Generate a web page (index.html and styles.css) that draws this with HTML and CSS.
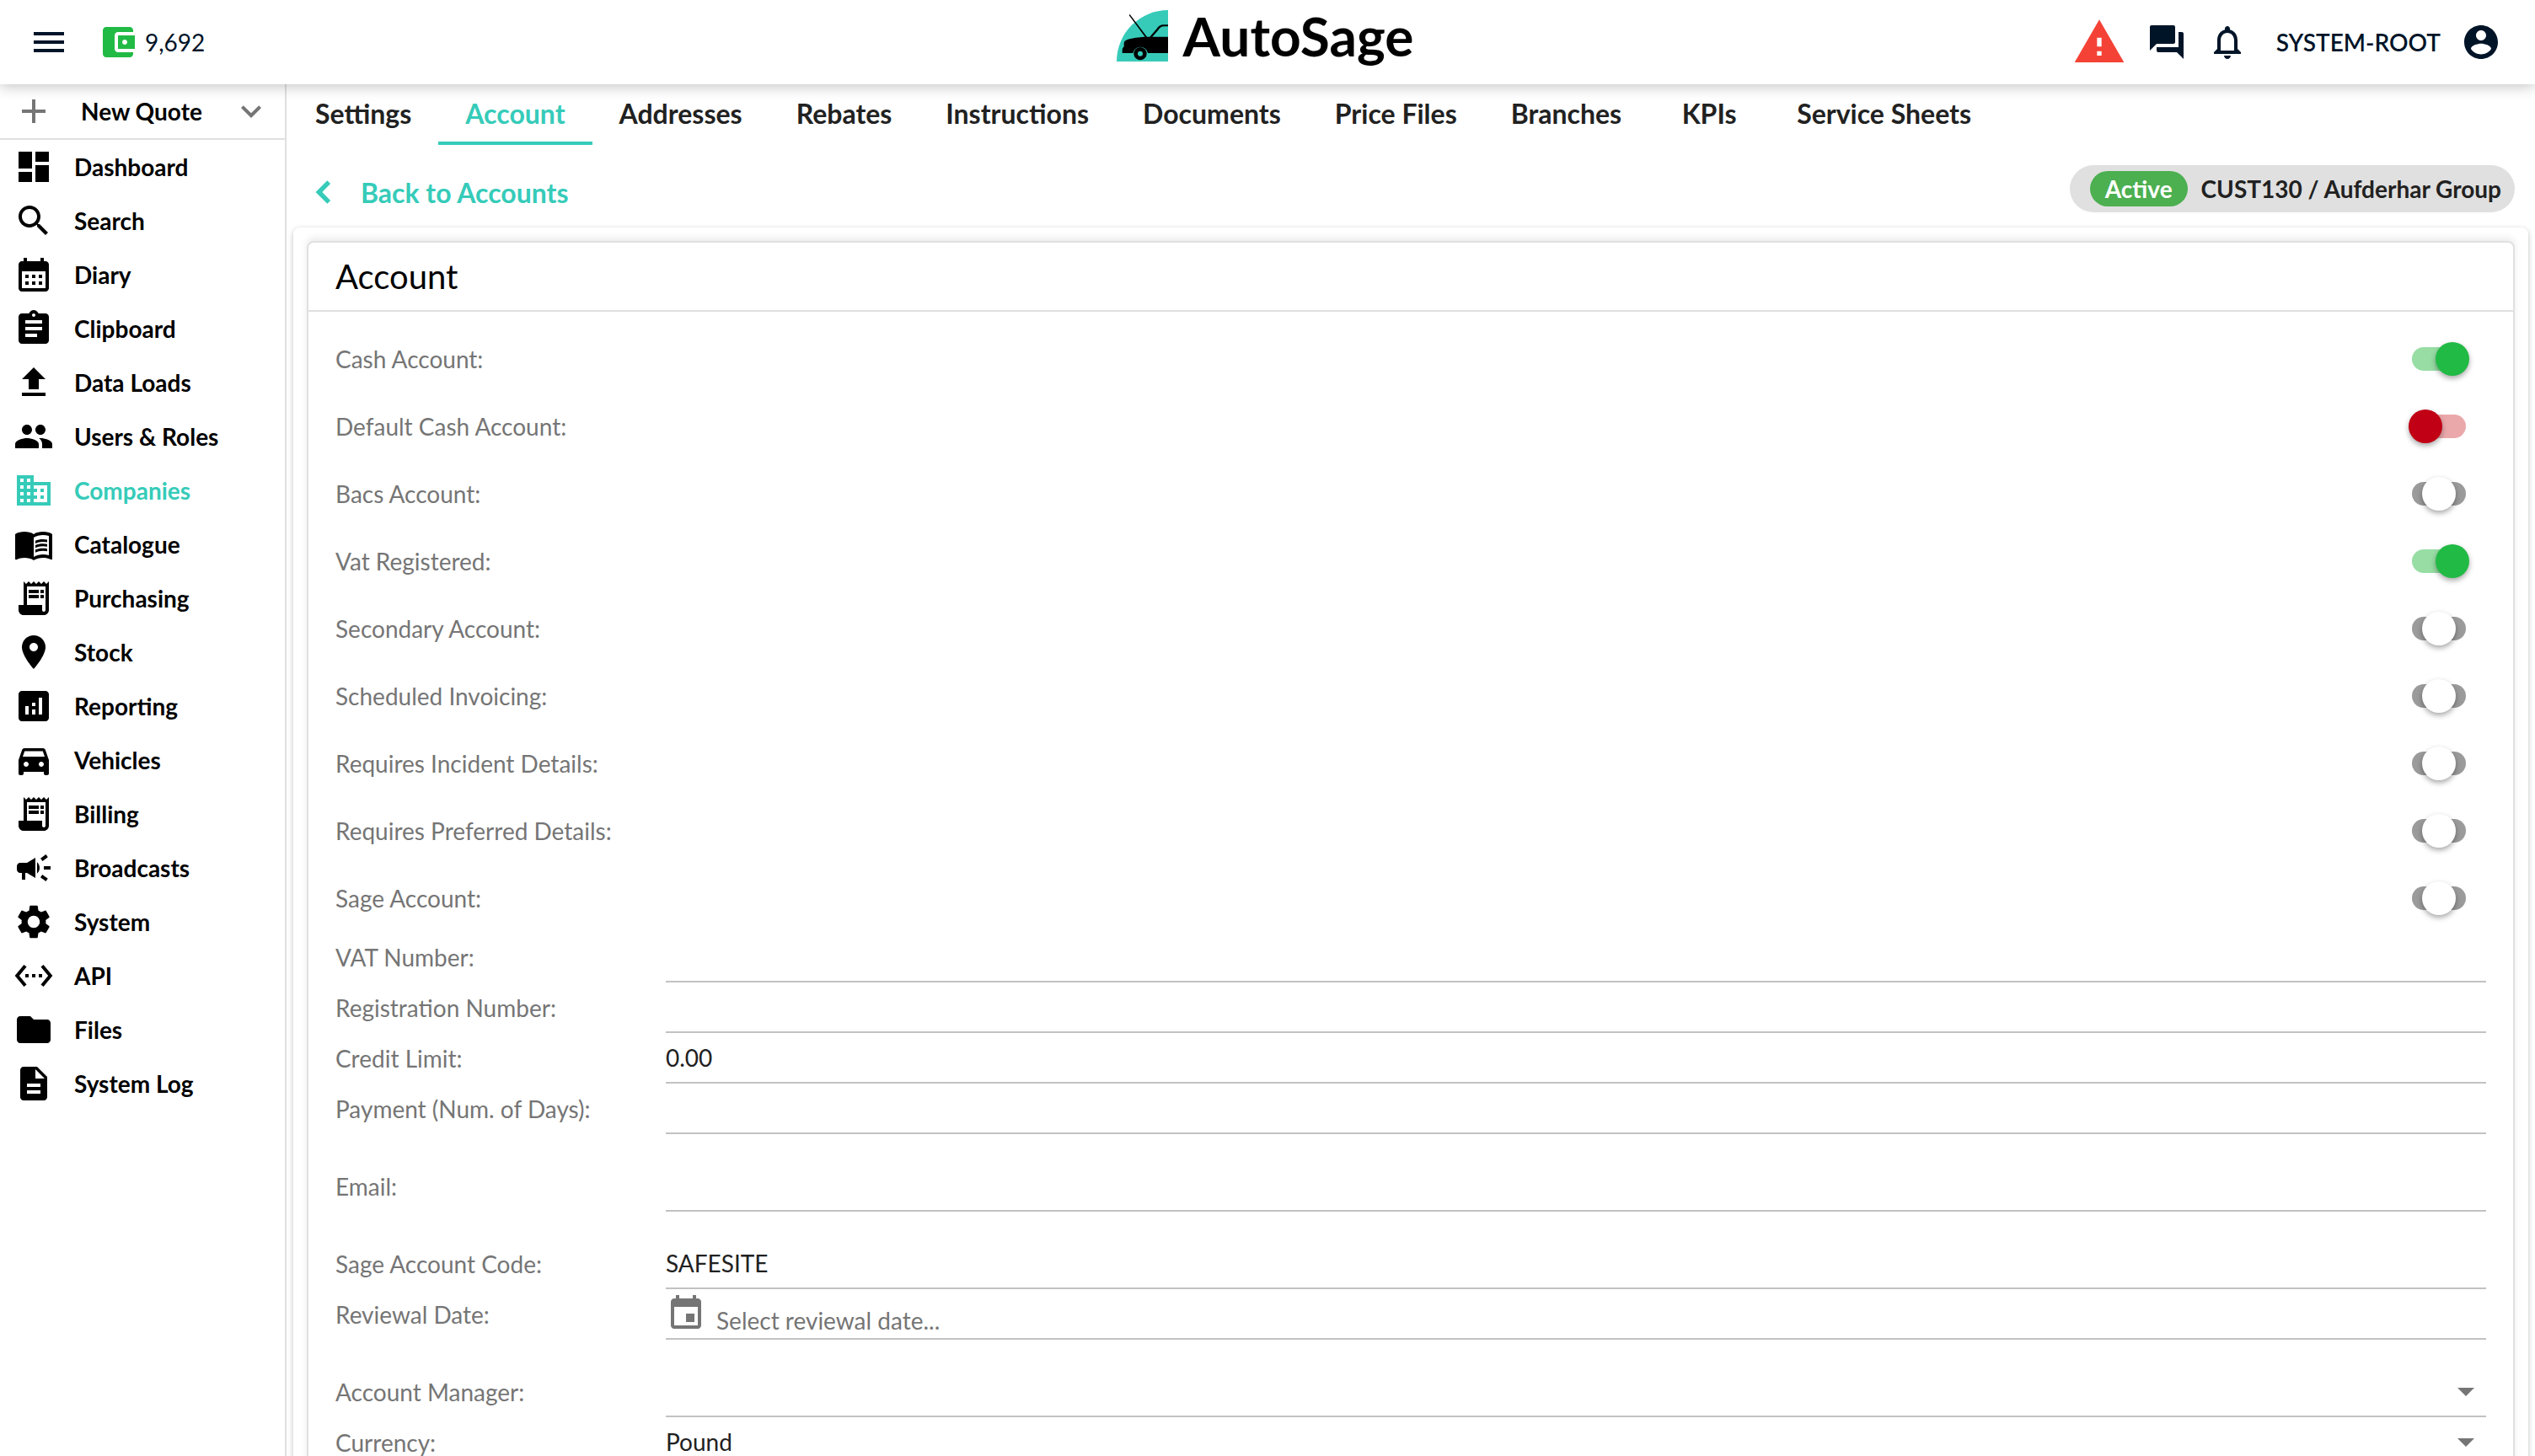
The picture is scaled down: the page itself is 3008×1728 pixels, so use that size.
FILE: index.html
```
<!DOCTYPE html>
<html lang="en">
<head>
    <meta charset="UTF-8">
    <meta name="viewport" content="width=device-width, initial-scale=1.0">
    <title>AutoSage - Account</title>
    <link rel="stylesheet" href="styles.css">
</head>
<body>
    <header class="header">
        <div class="header-left">
            <button class="icon-btn" aria-label="Menu">
                <svg class="icon" viewBox="0 0 24 24"><path d="M3 18h18v-2H3v2zm0-5h18v-2H3v2zm0-7v2h18V6H3z"/></svg>
            </button>
            <div class="credits">
                <svg class="icon icon-green" viewBox="0 0 24 24"><path d="M21 18v1c0 1.1-.9 2-2 2H5c-1.11 0-2-.9-2-2V5c0-1.1.89-2 2-2h14c1.1 0 2 .9 2 2v1h-9c-1.11 0-2 .9-2 2v8c0 1.1.89 2 2 2h9zm-9-2h10V8H12v8zm4-2.5c-.83 0-1.5-.67-1.5-1.5s.67-1.5 1.5-1.5 1.5.67 1.5 1.5-.67 1.5-1.5 1.5z"/></svg>
                <span>9,692</span>
            </div>
        </div>

        <a href="#" class="logo">
            <svg class="logo-mark" viewBox="0 0 183 183">
                <path fill="#36cbb9" d="M0 183A183 183 0 0 1 183 0V183Z"/>
                <path d="M183 52H168C155 52 149 58 143 66L118 95H108L47 15L44 18L101 95C70 97 40 101 29 110C24 115 27 123 26 130C22 134 20 138 20 143V153H58A27 27 0 0 1 111 153H183Z"/>
                <path fill="#36cbb9" d="M183 58H169C159 58 154 63 148 71L127 95H183Z"/>
                <circle cx="84" cy="155" r="23"/>
                <circle cx="84" cy="155" r="9" fill="#36cbb9"/>
            </svg>
            <span>AutoSage</span>
        </a>

        <div class="header-right">
            <button class="icon-btn" aria-label="Warnings">
                <svg class="icon icon-warning" viewBox="0 0 24 24"><path d="M1 21h22L12 2 1 21zm12-3h-2v-2h2v2zm0-4h-2v-4h2v4z"/></svg>
            </button>
            <button class="icon-btn" aria-label="Messages">
                <svg class="icon" viewBox="0 0 24 24"><path d="M21 6h-2v9H6v2c0 .55.45 1 1 1h11l4 4V7c0-.55-.45-1-1-1zm-4 6V3c0-.55-.45-1-1-1H3c-.55 0-1 .45-1 1v14l4-4h10c.55 0 1-.45 1-1z"/></svg>
            </button>
            <button class="icon-btn" aria-label="Notifications">
                <svg class="icon" viewBox="0 0 24 24"><path d="M12 22c1.1 0 2-.9 2-2h-4c0 1.1.9 2 2 2zm6-6v-5c0-3.07-1.63-5.64-4.5-6.32V4c0-.83-.67-1.5-1.5-1.5s-1.5.67-1.5 1.5v.68C7.64 5.36 6 7.92 6 11v5l-2 2v1h16v-1l-2-2zm-2 1H8v-6c0-2.48 1.51-4.5 4-4.5s4 2.02 4 4.5v6z"/></svg>
            </button>
            <button class="user-btn">
                SYSTEM-ROOT
                <svg class="icon" viewBox="0 0 24 24"><path d="M12 2C6.48 2 2 6.48 2 12s4.48 10 10 10 10-4.48 10-10S17.52 2 12 2zm0 3c1.66 0 3 1.34 3 3s-1.34 3-3 3-3-1.34-3-3 1.34-3 3-3zm0 14.2c-2.5 0-4.71-1.28-6-3.22.03-1.99 4-3.08 6-3.08 1.99 0 5.97 1.09 6 3.08-1.29 1.94-3.5 3.22-6 3.22z"/></svg>
            </button>
        </div>
    </header>

    <div class="layout">
        <!-- Sidebar -->
        <aside class="sidebar">
            <button class="new-quote">
                <svg class="icon" viewBox="0 0 24 24"><path d="M19 13h-6v6h-2v-6H5v-2h6V5h2v6h6v2z"/></svg>
                <span class="new-quote-text">New Quote</span>
                <svg class="icon" viewBox="0 0 24 24"><path d="M16.59 8.59L12 13.17 7.41 8.59 6 10l6 6 6-6z"/></svg>
            </button>
            <nav class="side-nav">
                <a href="#" class="side-link"><svg class="icon" viewBox="0 0 24 24"><path d="M3 13h8V3H3v10zm0 8h8v-6H3v6zm10 0h8V11h-8v10zm0-18v6h8V3h-8z"/></svg>Dashboard</a>
                <a href="#" class="side-link"><svg class="icon" viewBox="0 0 24 24"><path d="M15.5 14h-.79l-.28-.27C15.41 12.59 16 11.11 16 9.5 16 5.91 13.09 3 9.5 3S3 5.91 3 9.5 5.91 16 9.5 16c1.61 0 3.09-.59 4.23-1.57l.27.28v.79l5 4.99L20.49 19l-4.99-5zm-6 0C7.01 14 5 11.99 5 9.5S7.01 5 9.5 5 14 7.01 14 9.5 11.99 14 9.5 14z"/></svg>Search</a>
                <a href="#" class="side-link"><svg class="icon" viewBox="0 0 24 24"><path d="M19 4h-1V2h-2v2H8V2H6v2H5c-1.11 0-1.99.9-1.99 2L3 20c0 1.1.89 2 2 2h14c1.1 0 2-.9 2-2V6c0-1.1-.9-2-2-2zm0 16H5V10h14v10zM9 14H7v-2h2v2zm4 0h-2v-2h2v2zm4 0h-2v-2h2v2zm-8 4H7v-2h2v2zm4 0h-2v-2h2v2zm4 0h-2v-2h2v2z"/></svg>Diary</a>
                <a href="#" class="side-link"><svg class="icon" viewBox="0 0 24 24"><path d="M19 3h-4.18C14.4 1.84 13.3 1 12 1c-1.3 0-2.4.84-2.82 2H5c-1.1 0-2 .9-2 2v14c0 1.1.9 2 2 2h14c1.1 0 2-.9 2-2V5c0-1.1-.9-2-2-2zm-7 0c.55 0 1 .45 1 1s-.45 1-1 1-1-.45-1-1 .45-1 1-1zm2 14H7v-2h7v2zm3-4H7v-2h10v2zm0-4H7V7h10v2z"/></svg>Clipboard</a>
                <a href="#" class="side-link"><svg class="icon" viewBox="0 0 24 24"><path d="M9 16h6v-6h4l-7-7-7 7h4zm-4 2h14v2H5z"/></svg>Data Loads</a>
                <a href="#" class="side-link"><svg class="icon" viewBox="0 0 24 24"><path d="M16 11c1.66 0 2.99-1.34 2.99-3S17.66 5 16 5c-1.66 0-3 1.34-3 3s1.34 3 3 3zm-8 0c1.66 0 2.99-1.34 2.99-3S9.66 5 8 5C6.34 5 5 6.34 5 8s1.34 3 3 3zm0 2c-2.33 0-7 1.17-7 3.5V19h14v-2.5c0-2.33-4.67-3.5-7-3.5zm8 0c-.29 0-.62.02-.97.05 1.16.84 1.97 1.97 1.97 3.45V19h6v-2.5c0-2.33-4.67-3.5-7-3.5z"/></svg>Users &amp; Roles</a>
                <a href="#" class="side-link active"><svg class="icon" viewBox="0 0 24 24"><path d="M12 7V3H2v18h20V7H12zM6 19H4v-2h2v2zm0-4H4v-2h2v2zm0-4H4V9h2v2zm0-4H4V5h2v2zm4 12H8v-2h2v2zm0-4H8v-2h2v2zm0-4H8V9h2v2zm0-4H8V5h2v2zm10 12h-8v-2h2v-2h-2v-2h2v-2h-2V9h8v10zm-2-8h-2v2h2v-2zm0 4h-2v2h2v-2z"/></svg>Companies</a>
                <a href="#" class="side-link"><svg class="icon" viewBox="0 0 24 24"><path d="M21 5c-1.11-.35-2.33-.5-3.5-.5-1.95 0-4.05.4-5.5 1.5-1.45-1.1-3.55-1.5-5.5-1.5S2.45 4.9 1 6v14.65c0 .25.25.5.5.5.1 0 .15-.05.25-.05C3.1 20.45 5.05 20 6.5 20c1.95 0 4.05.4 5.5 1.5 1.35-.85 3.8-1.5 5.5-1.5 1.65 0 3.35.3 4.75 1.05.1.05.15.05.25.05.25 0 .5-.25.5-.5V6c-.6-.45-1.25-.75-2-1zm0 13.5c-1.1-.35-2.3-.5-3.5-.5-1.7 0-4.15.65-5.5 1.5V8c1.35-.85 3.8-1.5 5.5-1.5 1.2 0 2.4.15 3.5.5v11.5z"/><path d="M17.5 10.5c.88 0 1.73.09 2.5.26V9.24c-.79-.15-1.64-.24-2.5-.24-1.7 0-3.24.29-4.5.83v1.66c1.13-.64 2.7-.99 4.5-.99zM13 12.49v1.66c1.13-.64 2.7-.99 4.5-.99.88 0 1.73.09 2.5.26V11.9c-.79-.15-1.64-.24-2.5-.24-1.7 0-3.24.3-4.5.83zM17.5 14.33c-1.7 0-3.24.29-4.5.83v1.66c1.13-.64 2.7-.99 4.5-.99.88 0 1.73.09 2.5.26v-1.52c-.79-.16-1.64-.24-2.5-.24z"/></svg>Catalogue</a>
                <a href="#" class="side-link"><svg class="icon" viewBox="0 0 24 24"><path d="M19.5 3.5L18 2l-1.5 1.5L15 2l-1.5 1.5L12 2l-1.5 1.5L9 2 7.5 3.5 6 2v14H3v3c0 1.66 1.34 3 3 3h12c1.66 0 3-1.34 3-3V2l-1.5 1.5zM19 19c0 .55-.45 1-1 1s-1-.45-1-1v-3H8V5h11v14z"/><path d="M9 7h6v2H9zM16 7h2v2h-2zM9 10h6v2H9zM16 10h2v2h-2z"/></svg>Purchasing</a>
                <a href="#" class="side-link"><svg class="icon" viewBox="0 0 24 24"><path d="M12 2C8.13 2 5 5.13 5 9c0 5.25 7 13 7 13s7-7.75 7-13c0-3.87-3.13-7-7-7zm0 9.5c-1.38 0-2.5-1.12-2.5-2.5s1.12-2.5 2.5-2.5 2.5 1.12 2.5 2.5-1.12 2.5-2.5 2.5z"/></svg>Stock</a>
                <a href="#" class="side-link"><svg class="icon" viewBox="0 0 24 24"><path d="M19 3H5c-1.1 0-2 .9-2 2v14c0 1.1.9 2 2 2h14c1.1 0 2-.9 2-2V5c0-1.1-.9-2-2-2zM9 17H7v-5h2v5zm4 0h-2v-3h2v3zm0-5h-2v-2h2v2zm4 5h-2V7h2v10z"/></svg>Reporting</a>
                <a href="#" class="side-link"><svg class="icon" viewBox="0 0 24 24"><path d="M18.92 6.01C18.72 5.42 18.16 5 17.5 5h-11c-.66 0-1.21.42-1.42 1.01L3 12v8c0 .55.45 1 1 1h1c.55 0 1-.45 1-1v-1h12v1c0 .55.45 1 1 1h1c.55 0 1-.45 1-1v-8l-2.08-5.99zM7.5 16c-.83 0-1.5-.67-1.5-1.5S6.67 13 7.5 13s1.5.67 1.5 1.5S8.33 16 7.5 16zm9 0c-.83 0-1.5-.67-1.5-1.5s.67-1.5 1.5-1.5 1.5.67 1.5 1.5-.67 1.5-1.5 1.5zM5.5 10l1.1-3.2h10.8l1.1 3.2h-13z"/></svg>Vehicles</a>
                <a href="#" class="side-link"><svg class="icon" viewBox="0 0 24 24"><path d="M19.5 3.5L18 2l-1.5 1.5L15 2l-1.5 1.5L12 2l-1.5 1.5L9 2 7.5 3.5 6 2v14H3v3c0 1.66 1.34 3 3 3h12c1.66 0 3-1.34 3-3V2l-1.5 1.5zM19 19c0 .55-.45 1-1 1s-1-.45-1-1v-3H8V5h11v14z"/><path d="M9 7h6v2H9zM16 7h2v2h-2zM9 10h6v2H9zM16 10h2v2h-2z"/></svg>Billing</a>
                <a href="#" class="side-link"><svg class="icon" viewBox="0 0 24 24"><path d="M18 11v2h4v-2h-4zM16 17.61c.96.71 2.21 1.65 3.2 2.39.4-.53.8-1.07 1.2-1.6-.99-.74-2.24-1.68-3.2-2.4-.4.54-.8 1.08-1.2 1.61zM20.4 5.6c-.4-.53-.8-1.07-1.2-1.6-.99.74-2.24 1.68-3.2 2.4.4.53.8 1.07 1.2 1.6.96-.72 2.21-1.65 3.2-2.4zM4 9c-1.1 0-2 .9-2 2v2c0 1.1.9 2 2 2h1v4h2v-4h1l5 3V6L8 9H4zM15.5 12c0-1.33-.58-2.53-1.5-3.35v6.69c.92-.81 1.5-2.01 1.5-3.34z"/></svg>Broadcasts</a>
                <a href="#" class="side-link"><svg class="icon" viewBox="0 0 24 24"><path d="M19.14 12.94c.04-.3.06-.61.06-.94 0-.32-.02-.64-.07-.94l2.03-1.58c.18-.14.23-.41.12-.61l-1.92-3.32c-.12-.22-.37-.29-.59-.22l-2.39.96c-.5-.38-1.03-.7-1.62-.94l-.36-2.54c-.04-.24-.24-.41-.48-.41h-3.84c-.24 0-.43.17-.47.41l-.36 2.54c-.59.24-1.13.57-1.62.94l-2.39-.96c-.22-.08-.47 0-.59.22L2.74 8.87c-.12.21-.08.47.12.61l2.03 1.58c-.05.3-.09.63-.09.94s.02.64.07.94l-2.03 1.58c-.18.14-.23.41-.12.61l1.92 3.32c.12.22.37.29.59.22l2.39-.96c.5.38 1.03.7 1.62.94l.36 2.54c.05.24.24.41.48.41h3.84c.24 0 .44-.17.47-.41l.36-2.54c.59-.24 1.13-.56 1.62-.94l2.39.96c.22.08.47 0 .59-.22l1.92-3.32c.12-.22.07-.47-.12-.61l-2.01-1.58zM12 15.6c-1.98 0-3.6-1.62-3.6-3.6s1.62-3.6 3.6-3.6 3.6 1.62 3.6 3.6-1.62 3.6-3.6 3.6z"/></svg>System</a>
                <a href="#" class="side-link"><svg class="icon" viewBox="0 0 24 24"><path d="M7.77 6.76L6.23 5.48.82 12l5.41 6.52 1.54-1.28L3.42 12l4.35-5.24zM7 13h2v-2H7v2zm10-2h-2v2h2v-2zm-6 2h2v-2h-2v2zm6.77-7.52l-1.54 1.28L20.58 12l-4.35 5.24 1.54 1.28L23.18 12l-5.41-6.52z"/></svg>API</a>
                <a href="#" class="side-link"><svg class="icon" viewBox="0 0 24 24"><path d="M10 4H4c-1.1 0-1.99.9-1.99 2L2 18c0 1.1.9 2 2 2h16c1.1 0 2-.9 2-2V8c0-1.1-.9-2-2-2h-8l-2-2z"/></svg>Files</a>
                <a href="#" class="side-link"><svg class="icon" viewBox="0 0 24 24"><path d="M14 2H6c-1.1 0-1.99.9-1.99 2L4 20c0 1.1.89 2 1.99 2H18c1.1 0 2-.9 2-2V8l-6-6zm2 16H8v-2h8v2zm0-4H8v-2h8v2zm-3-5V3.5L18.5 9H13z"/></svg>System Log</a>
            </nav>
        </aside>

        <main class="main">
            <nav class="tabs">
                <a href="#" class="tab">Settings</a>
                <a href="#" class="tab active">Account</a>
                <a href="#" class="tab">Addresses</a>
                <a href="#" class="tab">Rebates</a>
                <a href="#" class="tab">Instructions</a>
                <a href="#" class="tab">Documents</a>
                <a href="#" class="tab">Price Files</a>
                <a href="#" class="tab">Branches</a>
                <a href="#" class="tab">KPIs</a>
                <a href="#" class="tab">Service Sheets</a>
            </nav>

            <div class="sub-header">
                <a href="#" class="back-link">
                    <svg class="icon" viewBox="0 0 24 24"><path d="M15.41 7.41L14 6l-6 6 6 6 1.41-1.41L10.83 12z"/></svg>
                    Back to Accounts
                </a>
                <div class="company-chip">
                    <span class="status">Active</span>
                    <span>CUST130 / Aufderhar Group</span>
                </div>
            </div>

            <div class="panel">
                <form class="card">
                    <h1 class="card-title">Account</h1>
                    <div class="card-body">
                        <!-- Three-state switches: on, off, not set -->
                        <div class="switch-row"><label for="cash">Cash Account:</label><input type="checkbox" class="switch" id="cash" checked></div>
                        <div class="switch-row"><label for="defaultCash">Default Cash Account:</label><input type="checkbox" class="switch" id="defaultCash"></div>
                        <div class="switch-row"><label for="bacs">Bacs Account:</label><input type="checkbox" class="switch" id="bacs" data-unset></div>
                        <div class="switch-row"><label for="vatRegistered">Vat Registered:</label><input type="checkbox" class="switch" id="vatRegistered" checked></div>
                        <div class="switch-row"><label for="secondary">Secondary Account:</label><input type="checkbox" class="switch" id="secondary" data-unset></div>
                        <div class="switch-row"><label for="scheduled">Scheduled Invoicing:</label><input type="checkbox" class="switch" id="scheduled" data-unset></div>
                        <div class="switch-row"><label for="incident">Requires Incident Details:</label><input type="checkbox" class="switch" id="incident" data-unset></div>
                        <div class="switch-row"><label for="preferred">Requires Preferred Details:</label><input type="checkbox" class="switch" id="preferred" data-unset></div>
                        <div class="switch-row"><label for="sage">Sage Account:</label><input type="checkbox" class="switch" id="sage" data-unset></div>

                        <div class="field-row"><label for="vatNumber">VAT Number:</label><div class="field"><input type="text" id="vatNumber"></div></div>
                        <div class="field-row"><label for="regNumber">Registration Number:</label><div class="field"><input type="text" id="regNumber"></div></div>
                        <div class="field-row"><label for="creditLimit">Credit Limit:</label><div class="field"><input type="text" id="creditLimit" value="0.00"></div></div>
                        <div class="field-row"><label for="paymentDays">Payment (Num. of Days):</label><div class="field"><input type="text" id="paymentDays"></div></div>
                        <div class="field-row spaced"><label for="email">Email:</label><div class="field"><input type="email" id="email"></div></div>
                        <div class="field-row spaced"><label for="sageCode">Sage Account Code:</label><div class="field"><input type="text" id="sageCode" value="SAFESITE"></div></div>
                        <div class="field-row">
                            <label for="reviewDate">Reviewal Date:</label>
                            <div class="field date-field">
                                <svg class="icon" viewBox="0 0 24 24"><path d="M17 12h-5v5h5v-5zM16 1v2H8V1H6v2H5c-1.11 0-1.99.9-1.99 2L3 19c0 1.1.89 2 2 2h14c1.1 0 2-.9 2-2V5c0-1.1-.9-2-2-2h-1V1h-2zm3 18H5V8h14v11z"/></svg>
                                <input type="text" id="reviewDate" placeholder="Select reviewal date...">
                            </div>
                        </div>
                        <div class="field-row spaced">
                            <label for="manager">Account Manager:</label>
                            <div class="field">
                                <select id="manager"><option></option></select>
                                <svg class="icon select-arrow" viewBox="0 0 24 24"><path d="M7 10l5 5 5-5z"/></svg>
                            </div>
                        </div>
                        <div class="field-row">
                            <label for="currency">Currency:</label>
                            <div class="field">
                                <select id="currency"><option>Pound</option></select>
                                <svg class="icon select-arrow" viewBox="0 0 24 24"><path d="M7 10l5 5 5-5z"/></svg>
                            </div>
                        </div>
                    </div>
                </form>
            </div>
        </main>
    </div>

    <script>
        // Switches with no value yet sit in the middle
        document.querySelectorAll('[data-unset]').forEach(el => {
            el.indeterminate = true;
        });
    </script>
</body>
</html>
```
FILE: styles.css
```
* {
    margin: 0;
    padding: 0;
    box-sizing: border-box;
}

body {
    font-family: Lato, "Open Sans", sans-serif;
    font-size: 28px;
    color: #212121;
    background: #fff;
    height: 100vh;
    display: flex;
    flex-direction: column;
    overflow: hidden;
}

a {
    color: inherit;
    text-decoration: none;
}

button,
input,
select {
    font: inherit;
    color: inherit;
    background: none;
    border: none;
    outline: none;
}

button {
    cursor: pointer;
}

.icon {
    display: block;
    width: 48px;
    height: 48px;
    flex-shrink: 0;
    fill: currentColor;
}

/* Header */
.header {
    position: relative;
    z-index: 10;
    flex-shrink: 0;
    height: 100px;
    padding: 0 40px 0 34px;
    display: grid;
    grid-template-columns: 1fr auto 1fr;
    align-items: center;
    color: #001428;
    background: #fff;
    box-shadow: 0 2px 16px rgba(0, 0, 0, 0.25);
}

.header-left {
    display: flex;
    align-items: center;
    gap: 34px;
}

.credits {
    display: flex;
    align-items: center;
    gap: 8px;
}

.icon-green {
    color: #21ba45;
}

.logo {
    display: flex;
    align-items: center;
    gap: 18px;
    height: 84px;
    align-self: start;
    color: #000;
    font-size: 64px;
    font-weight: bold;
}

.logo-mark {
    width: 61px;
    height: 61px;
}

.header-right {
    display: flex;
    align-items: center;
    justify-content: flex-end;
    gap: 24px;
}

.icon-warning {
    width: 64px;
    height: 64px;
    color: #f44336;
}

.user-btn {
    display: flex;
    align-items: center;
    gap: 24px;
    margin-left: 10px;
    font-weight: 600;
}

/* Sidebar */
.layout {
    flex: 1;
    min-height: 0;
    display: flex;
}

.sidebar {
    width: 340px;
    flex-shrink: 0;
    border-right: 2px solid #e0e0e0;
    color: #000;
    font-weight: bold;
}

.new-quote {
    display: flex;
    align-items: center;
    width: 100%;
    height: 66px;
    padding: 0 16px;
    border-bottom: 2px solid #e0e0e0;
    font-weight: bold;
}

.new-quote .icon {
    color: #757575;
}

.new-quote-text {
    flex: 1;
    padding-left: 32px;
    text-align: left;
}

.side-link {
    display: flex;
    align-items: center;
    gap: 24px;
    height: 64px;
    padding-left: 16px;
}

.side-link.active,
.tab.active,
.back-link {
    color: #36cbb9;
}

/* Main Content */
.main {
    flex: 1;
    min-width: 0;
    overflow-y: auto;
    scrollbar-width: none;
}

.tabs {
    display: flex;
    padding-left: 2px;
    font-size: 32px;
    font-weight: bold;
}

.tab {
    display: flex;
    align-items: center;
    justify-content: center;
    height: 72px;
    min-width: 144px;
    padding: 0 32px;
    border-bottom: 4px solid transparent;
}

.tab.active {
    border-color: #36cbb9;
}

.sub-header {
    display: flex;
    align-items: flex-end;
    justify-content: space-between;
    height: 96px;
    padding: 0 24px 16px 18px;
}

.back-link {
    display: flex;
    align-items: center;
    gap: 18px;
    height: 48px;
    font-size: 32px;
    font-weight: bold;
}

.back-link .icon {
    width: 52px;
    height: 52px;
    stroke: currentColor;
    stroke-width: 0.5;
}

.company-chip {
    display: flex;
    align-items: center;
    gap: 16px;
    height: 56px;
    padding: 0 16px 0 24px;
    border-radius: 28px;
    background: #e0e0e0;
    font-weight: bold;
}

.status {
    padding: 0 18px;
    line-height: 42px;
    border-radius: 21px;
    background: #4caf50;
    color: #fff;
}

/* Account form */
.panel {
    margin: 2px 8px 16px;
    padding: 16px;
    border-radius: 8px;
    box-shadow: 0 2px 6px rgba(0, 0, 0, 0.25);
}

.card {
    border: 2px solid #e0e0e0;
    border-radius: 8px;
    box-shadow: 0 -4px 8px rgba(0, 0, 0, 0.08);
}

.card-title {
    height: 82px;
    line-height: 80px;
    padding: 0 32px;
    border-bottom: 2px solid #e0e0e0;
    color: #000;
    font-size: 40px;
    font-weight: normal;
}

.card-body {
    padding: 16px 32px;
}

.card-body label {
    color: #757575;
}

.switch-row {
    display: flex;
    align-items: center;
    justify-content: space-between;
    height: 80px;
    padding-right: 24px;
}

.switch {
    appearance: none;
    position: relative;
    width: 64px;
    height: 28px;
    border-radius: 14px;
    background: #eba8ab;
    cursor: pointer;
}

/* Knob */
.switch::before {
    content: "";
    position: absolute;
    top: -6px;
    left: -4px;
    width: 40px;
    height: 40px;
    border-radius: 50%;
    background: #c10015;
    box-shadow: 0 3px 6px rgba(0, 0, 0, 0.35);
}

.switch:checked {
    background: #97dda4;
}

.switch:checked::before {
    left: 28px;
    background: #21ba45;
}

.switch:indeterminate {
    background: #9b9b9b;
}

.switch:indeterminate::before {
    left: 12px;
    background: #fff;
}

.field-row {
    display: flex;
    align-items: center;
    height: 60px;
}

.field-row.spaced {
    margin-top: 32px;
}

.field-row label {
    width: 392px;
    flex-shrink: 0;
}

.field {
    position: relative;
    flex: 1;
    display: flex;
    align-items: center;
    height: 60px;
    border-bottom: 2px solid #c2c2c2;
}

.field input,
.field select {
    flex: 1;
    min-width: 0;
    height: 58px;
    appearance: none;
}

.date-field {
    gap: 12px;
    color: #757575;
}

.date-field input {
    padding-top: 16px;
}

.date-field input::placeholder {
    color: #757575;
}

.select-arrow {
    position: absolute;
    right: 0;
    color: #757575;
    pointer-events: none;
}
```
